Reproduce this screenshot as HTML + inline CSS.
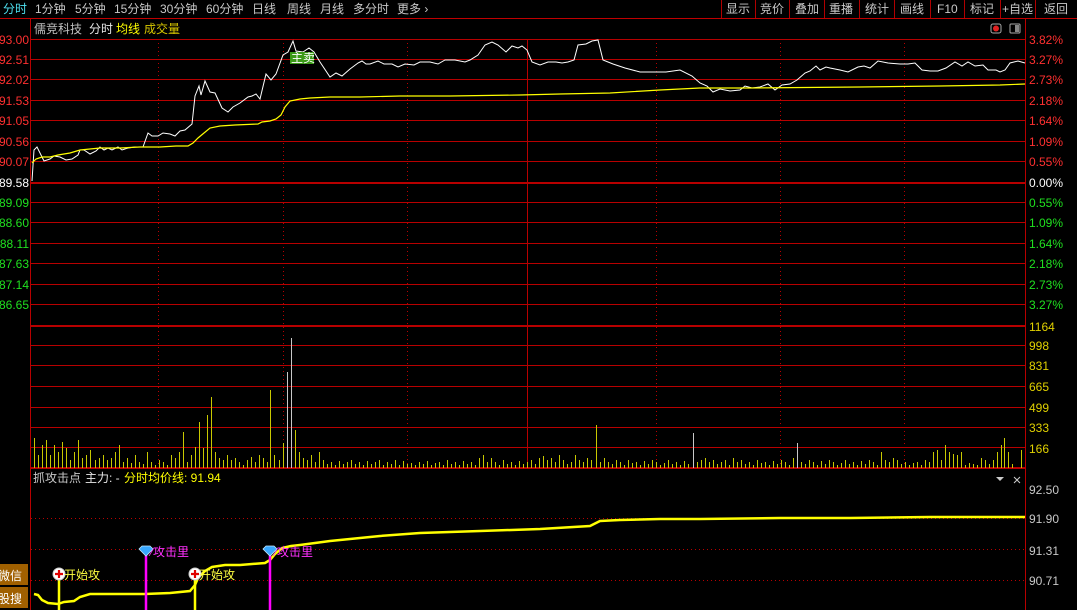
<!DOCTYPE html>
<html><head><meta charset="utf-8"><style>
html,body{margin:0;padding:0;background:#000;width:1077px;height:610px;overflow:hidden}
svg{display:block}
text{font-family:"Liberation Sans","Noto Sans CJK SC",sans-serif;font-size:12px}
</style></head><body>
<svg width="1077" height="610" xmlns="http://www.w3.org/2000/svg">
<rect width="1077" height="610" fill="#000"/>
<g font-size="12">
<text x="3" y="13" fill="#4fe0f0">分时</text>
<text x="35" y="13" fill="#c8c8c8">1分钟</text>
<text x="75" y="13" fill="#c8c8c8">5分钟</text>
<text x="114" y="13" fill="#c8c8c8">15分钟</text>
<text x="160" y="13" fill="#c8c8c8">30分钟</text>
<text x="206" y="13" fill="#c8c8c8">60分钟</text>
<text x="252" y="13" fill="#c8c8c8">日线</text>
<text x="287" y="13" fill="#c8c8c8">周线</text>
<text x="320" y="13" fill="#c8c8c8">月线</text>
<text x="353" y="13" fill="#c8c8c8">多分时</text>
<text x="397" y="13" fill="#c8c8c8">更多 ›</text>
<text x="726" y="13" fill="#c8c8c8">显示</text>
<text x="760" y="13" fill="#c8c8c8">竞价</text>
<text x="795" y="13" fill="#c8c8c8">叠加</text>
<text x="829" y="13" fill="#c8c8c8">重播</text>
<text x="865" y="13" fill="#c8c8c8">统计</text>
<text x="900" y="13" fill="#c8c8c8">画线</text>
<text x="937" y="13" fill="#c8c8c8">F10</text>
<text x="970" y="13" fill="#c8c8c8">标记</text>
<text x="1002" y="13" fill="#c8c8c8">+自选</text>
<text x="1044" y="13" fill="#c8c8c8">返回</text>
</g>
<g stroke="#b00000" stroke-width="1">
<line x1="721.5" y1="0" x2="721.5" y2="18"/><line x1="755.5" y1="0" x2="755.5" y2="18"/>
<line x1="789.5" y1="0" x2="789.5" y2="18"/><line x1="824.5" y1="0" x2="824.5" y2="18"/>
<line x1="859.5" y1="0" x2="859.5" y2="18"/><line x1="894.5" y1="0" x2="894.5" y2="18"/>
<line x1="930.5" y1="0" x2="930.5" y2="18"/><line x1="964.5" y1="0" x2="964.5" y2="18"/>
<line x1="1000.5" y1="0" x2="1000.5" y2="18"/><line x1="1035.5" y1="0" x2="1035.5" y2="18"/>
</g>
<rect x="0" y="18" width="1077" height="1" fill="#c00000"/>
<text x="34" y="33" fill="#c0c0c0">儒竞科技</text>
<text x="89" y="33" fill="#e8e8e8">分时</text>
<text x="116" y="33" fill="#ffff00">均线</text>
<text x="144" y="33" fill="#d8c800">成交量</text>
<rect x="991" y="24" width="10" height="9" rx="2" fill="none" stroke="#aaa"/><circle cx="996" cy="28.5" r="3" fill="#e02020"/>
<rect x="1010" y="24" width="10" height="9" rx="1" fill="none" stroke="#aaa"/><rect x="1015" y="25" width="4" height="7" fill="#888"/>

<!-- grid -->
<g fill="#b80000">
<rect x="31" y="39" width="994" height="1"/><rect x="31" y="59" width="994" height="1"/>
<rect x="31" y="79" width="994" height="1"/><rect x="31" y="100" width="994" height="1"/>
<rect x="31" y="120" width="994" height="1"/><rect x="31" y="141" width="994" height="1"/>
<rect x="31" y="161" width="994" height="1"/><rect x="31" y="182" width="994" height="2"/>
<rect x="31" y="202" width="994" height="1"/><rect x="31" y="222" width="994" height="1"/>
<rect x="31" y="243" width="994" height="1"/><rect x="31" y="263" width="994" height="1"/>
<rect x="31" y="284" width="994" height="1"/><rect x="31" y="304" width="994" height="1"/>
<rect x="31" y="325" width="994" height="2"/>
<rect x="31" y="345" width="994" height="1"/><rect x="31" y="365" width="994" height="1"/>
<rect x="31" y="386" width="994" height="1"/><rect x="31" y="407" width="994" height="1"/>
<rect x="31" y="427" width="994" height="1"/><rect x="31" y="447" width="994" height="1"/>
<rect x="31" y="467" width="994" height="2"/>
<rect x="30" y="19" width="1" height="591"/><rect x="1025" y="19" width="1" height="591"/>
<rect x="527" y="39" width="1" height="429"/>
</g>
<g stroke="#b80000" stroke-dasharray="1,3">
<line x1="158.5" y1="39" x2="158.5" y2="468"/><line x1="283.5" y1="39" x2="283.5" y2="468"/>
<line x1="407.5" y1="39" x2="407.5" y2="468"/><line x1="656.5" y1="39" x2="656.5" y2="468"/>
<line x1="780.5" y1="39" x2="780.5" y2="468"/><line x1="904.5" y1="39" x2="904.5" y2="468"/>
<line x1="31" y1="518.5" x2="1025" y2="518.5"/><line x1="31" y1="549.5" x2="1025" y2="549.5"/>
<line x1="31" y1="580.5" x2="1025" y2="580.5"/>
</g>

<!-- volume bars -->
<path fill="none" stroke="#c8c800" stroke-width="1" d="M34.5 468V438M38.5 468V455M42.5 468V445M46.5 468V440M50.5 468V455M54.5 468V445M58.5 468V452M62.5 468V442M66.5 468V448M70.5 468V460M74.5 468V452M78.5 468V440M82.5 468V458M86.5 468V455M90.5 468V450M95.5 468V460M99.5 468V458M103.5 468V455M107.5 468V460M111.5 468V458M115.5 468V452M119.5 468V445M123.5 468V462M127.5 468V458M131.5 468V463M135.5 468V455M139.5 468V462M143.5 468V464M147.5 468V452M151.5 468V462M155.5 468V465M159.5 468V460M163.5 468V462M167.5 468V465M171.5 468V455M175.5 468V458M179.5 468V452M183.5 468V432M187.5 468V462M191.5 468V455M195.5 468V447M199.5 468V422M203.5 468V448M207.5 468V415M211.5 468V397M215.5 468V452M219.5 468V458M223.5 468V460M227.5 468V455M231.5 468V460M235.5 468V458M239.5 468V462M243.5 468V465M247.5 468V460M251.5 468V457M255.5 468V462M259.5 468V455M263.5 468V458M267.5 468V462M270.5 468V390M274.5 468V455M279.5 468V460M283.5 468V443M295.5 468V430M299.5 468V452M303.5 468V458M307.5 468V460M311.5 468V455M315.5 468V462M319.5 468V452M323.5 468V460M327.5 468V464M331.5 468V462M335.5 468V465M339.5 468V461M343.5 468V464M347.5 468V462M351.5 468V460M355.5 468V464M359.5 468V462M363.5 468V465M367.5 468V461M371.5 468V464M375.5 468V462M379.5 468V460M383.5 468V465M387.5 468V462M391.5 468V464M395.5 468V460M399.5 468V465M403.5 468V461M407.5 468V464M411.5 468V463M415.5 468V465M419.5 468V462M423.5 468V464M427.5 468V461M431.5 468V465M435.5 468V463M439.5 468V462M443.5 468V465M447.5 468V460M451.5 468V464M455.5 468V462M459.5 468V465M463.5 468V461M467.5 468V464M471.5 468V462M475.5 468V465M479.5 468V458M483.5 468V455M487.5 468V462M491.5 468V458M495.5 468V462M499.5 468V465M503.5 468V460M507.5 468V464M511.5 468V462M515.5 468V465M519.5 468V461M523.5 468V464M527.5 468V462M531.5 468V460M535.5 468V464M539.5 468V458M543.5 468V456M547.5 468V460M551.5 468V458M555.5 468V462M559.5 468V455M563.5 468V460M567.5 468V464M571.5 468V462M575.5 468V455M579.5 468V460M583.5 468V462M587.5 468V458M591.5 468V460M596.5 468V425M600.5 468V462M604.5 468V458M608.5 468V462M612.5 468V464M616.5 468V460M620.5 468V462M624.5 468V465M628.5 468V460M632.5 468V463M636.5 468V462M640.5 468V465M644.5 468V461M648.5 468V464M652.5 468V460M656.5 468V462M660.5 468V465M664.5 468V463M668.5 468V460M672.5 468V464M676.5 468V462M680.5 468V465M684.5 468V461M688.5 468V464M697.5 468V462M701.5 468V460M705.5 468V458M709.5 468V462M713.5 468V460M717.5 468V464M721.5 468V462M725.5 468V460M729.5 468V465M733.5 468V458M737.5 468V462M741.5 468V460M745.5 468V464M749.5 468V462M753.5 468V465M757.5 468V460M761.5 468V463M765.5 468V462M769.5 468V465M773.5 468V461M777.5 468V464M781.5 468V460M785.5 468V462M789.5 468V465M793.5 468V458M801.5 468V462M805.5 468V464M809.5 468V460M813.5 468V462M817.5 468V465M821.5 468V461M825.5 468V464M829.5 468V460M833.5 468V462M837.5 468V465M841.5 468V463M845.5 468V460M849.5 468V464M853.5 468V462M857.5 468V465M861.5 468V461M865.5 468V464M869.5 468V460M873.5 468V462M877.5 468V465M881.5 468V452M885.5 468V460M889.5 468V462M893.5 468V458M897.5 468V460M901.5 468V464M905.5 468V462M909.5 468V465M913.5 468V463M917.5 468V462M921.5 468V465M925.5 468V460M929.5 468V462M933.5 468V452M937.5 468V450M941.5 468V460M945.5 468V445M949.5 468V452M953.5 468V454M957.5 468V455M961.5 468V452M965.5 468V465M969.5 468V463M973.5 468V464M977.5 468V465M981.5 468V458M985.5 468V460M989.5 468V464M993.5 468V460M997.5 468V452M1001.5 468V445M1004.5 468V438M1008.5 468V452M1012.5 468V464M1021.5 468V450"/>
<path fill="none" stroke="#c8c8c8" stroke-width="1" d="M287.5 468V372M291.5 468V338M693.5 468V433M797.5 468V443"/>

<!-- price lines -->
<polyline fill="none" stroke="#fff" stroke-width="1" points="32,181 34,150 37,147 40,153 44,161 50,159 54,156 60,157 66,160 72,159 78,155 80,150 84,150 90,154 96,151 100,147 104,150 108,148 112,150 118,147 122,150 128,148 135,147 143,147 148,133 152,136 158,136 163,133 170,134 175,136 180,131 185,130 192,124 195,96 199,86 201,95 205,81 210,92 215,93 222,108 228,112 233,107 240,103 248,97 252,96 256,94 260,99 266,74 271,80 276,74 283,55 288,52 293,41 296,51 303,52 309,48 314,52 320,62 330,77 336,73 342,76 350,69 358,63 362,61 366,64 370,64 378,61 384,64 392,64 398,67 405,64 414,65 420,62 430,62 438,64 445,60 455,60 465,62 470,60 478,55 485,45 492,42 498,45 506,52 512,46 518,48 522,46 527,50 532,62 540,65 548,62 556,62 562,63 568,62 574,60 578,45 586,44 592,41 598,40 603,60 613,64 625,68 640,72 656,72 666,72 680,70 692,76 700,83 707,86 713,92 720,89 730,91 740,90 745,86 752,88 760,87 768,84 775,90 782,85 790,84 797,80 805,73 810,71 816,66 820,70 826,67 830,68 840,70 848,72 858,67 864,66 870,68 878,61 888,63 900,64 908,64 915,63 922,70 930,71 938,71 946,68 955,62 962,66 968,62 975,66 983,65 988,70 996,70 1000,72 1005,70 1010,63 1018,61 1025,63"/>
<polyline fill="none" stroke="#ffff00" stroke-width="1.2" points="32,163 36,159 42,157 50,157 58,155 70,153 80,150 90,149 100,148 120,148 140,147 160,147 176,146 188,146 193,143 198,138 204,133 210,128 220,126 235,125 258,124 262,122 270,121 276,119 281,115 285,107 290,101 300,99 310,98 330,97 360,97 400,96 450,96 520,95 560,94 610,93 660,90 700,88 750,88 860,87 940,86 1000,85 1025,84"/>
<rect x="290" y="52" width="24" height="12" fill="#3c9a18"/>
<text x="291" y="62" fill="#fff" font-size="11">主卖</text>

<!-- left labels -->
<g text-anchor="end">
<text x="29" y="44" fill="#ff3030">93.00</text><text x="29" y="64" fill="#ff3030">92.51</text>
<text x="29" y="84" fill="#ff3030">92.02</text><text x="29" y="105" fill="#ff3030">91.53</text>
<text x="29" y="125" fill="#ff3030">91.05</text><text x="29" y="146" fill="#ff3030">90.56</text>
<text x="29" y="166" fill="#ff3030">90.07</text><text x="29" y="187" fill="#fff">89.58</text>
<text x="29" y="207" fill="#20e020">89.09</text><text x="29" y="227" fill="#20e020">88.60</text>
<text x="29" y="248" fill="#20e020">88.11</text><text x="29" y="268" fill="#20e020">87.63</text>
<text x="29" y="289" fill="#20e020">87.14</text><text x="29" y="309" fill="#20e020">86.65</text>
</g>
<g>
<text x="1029" y="44" fill="#ff3030">3.82%</text><text x="1029" y="64" fill="#ff3030">3.27%</text>
<text x="1029" y="84" fill="#ff3030">2.73%</text><text x="1029" y="105" fill="#ff3030">2.18%</text>
<text x="1029" y="125" fill="#ff3030">1.64%</text><text x="1029" y="146" fill="#ff3030">1.09%</text>
<text x="1029" y="166" fill="#ff3030">0.55%</text><text x="1029" y="187" fill="#fff">0.00%</text>
<text x="1029" y="207" fill="#20e020">0.55%</text><text x="1029" y="227" fill="#20e020">1.09%</text>
<text x="1029" y="248" fill="#20e020">1.64%</text><text x="1029" y="268" fill="#20e020">2.18%</text>
<text x="1029" y="289" fill="#20e020">2.73%</text><text x="1029" y="309" fill="#20e020">3.27%</text>
<text x="1029" y="331" fill="#e0d000">1164</text><text x="1029" y="350" fill="#e0d000">998</text>
<text x="1029" y="370" fill="#e0d000">831</text><text x="1029" y="391" fill="#e0d000">665</text>
<text x="1029" y="412" fill="#e0d000">499</text><text x="1029" y="432" fill="#e0d000">333</text>
<text x="1029" y="453" fill="#e0d000">166</text>
<text x="1029" y="494" fill="#c8c8c8">92.50</text><text x="1029" y="523" fill="#c8c8c8">91.90</text>
<text x="1029" y="555" fill="#c8c8c8">91.31</text><text x="1029" y="585" fill="#c8c8c8">90.71</text>
</g>

<!-- indicator -->
<text x="33" y="482" fill="#c8c8c8">抓攻击点</text>
<text x="85" y="482" fill="#e8e8e8">主力: -</text>
<text x="124" y="482" fill="#ffff00">分时均价线: 91.94</text>
<path d="M996 477 h8 l-4 4 z" fill="#ccc"/>
<path d="M1014 477 l6 6 M1020 477 l-6 6" stroke="#ccc" stroke-width="1"/>
<polyline fill="none" stroke="#ffff00" stroke-width="2.5" points="34,594 38,595 42,600 48,603 58,604 64,602 74,601 80,597 90,594 120,594 145,594 170,593 190,591 195,585 198,578 205,571 212,567 225,565 240,565 265,563 270,560 275,554 282,548 291,546 300,545 315,543 330,541 350,539 380,536 420,533 480,531 540,529 590,526 600,521 620,520 660,519 700,519 780,518 850,518 930,517 1000,517 1025,517"/>
<line x1="59" y1="572" x2="59" y2="610" stroke="#ffff00" stroke-width="2.5"/>
<line x1="195" y1="572" x2="195" y2="610" stroke="#ffff00" stroke-width="2.5"/>
<line x1="146" y1="548" x2="146" y2="610" stroke="#ff00ff" stroke-width="2.5"/>
<line x1="270" y1="548" x2="270" y2="610" stroke="#ff00ff" stroke-width="2.5"/>
<g><circle cx="59" cy="574" r="6" fill="#fff" stroke="#ccc"/><path d="M55 574h8M59 570v8" stroke="#e00000" stroke-width="2.2"/></g>
<g><circle cx="195" cy="574" r="6" fill="#fff" stroke="#ccc"/><path d="M191 574h8M195 570v8" stroke="#e00000" stroke-width="2.2"/></g>
<path d="M139 549 l3-3 h8 l3 3 l-7 7 z" fill="#38a8ff" stroke="#c0e8ff" stroke-width="0.8"/>
<path d="M263 549 l3-3 h8 l3 3 l-7 7 z" fill="#38a8ff" stroke="#c0e8ff" stroke-width="0.8"/>
<text x="64" y="579" fill="#ffff40">开始攻</text>
<text x="199" y="579" fill="#ffff40">开始攻</text>
<text x="151" y="556" fill="#ff30ff">⁄攻击里</text>
<text x="275" y="556" fill="#ff30ff">⁄攻击里</text>
<rect x="0" y="564" width="28" height="21" fill="#a06000"/>
<rect x="0" y="587" width="28" height="21" fill="#a06000"/>
<text x="-2" y="580" fill="#fff" font-size="13">微信</text>
<text x="-2" y="603" fill="#fff" font-size="13">股搜</text>
</svg>
</body></html>
